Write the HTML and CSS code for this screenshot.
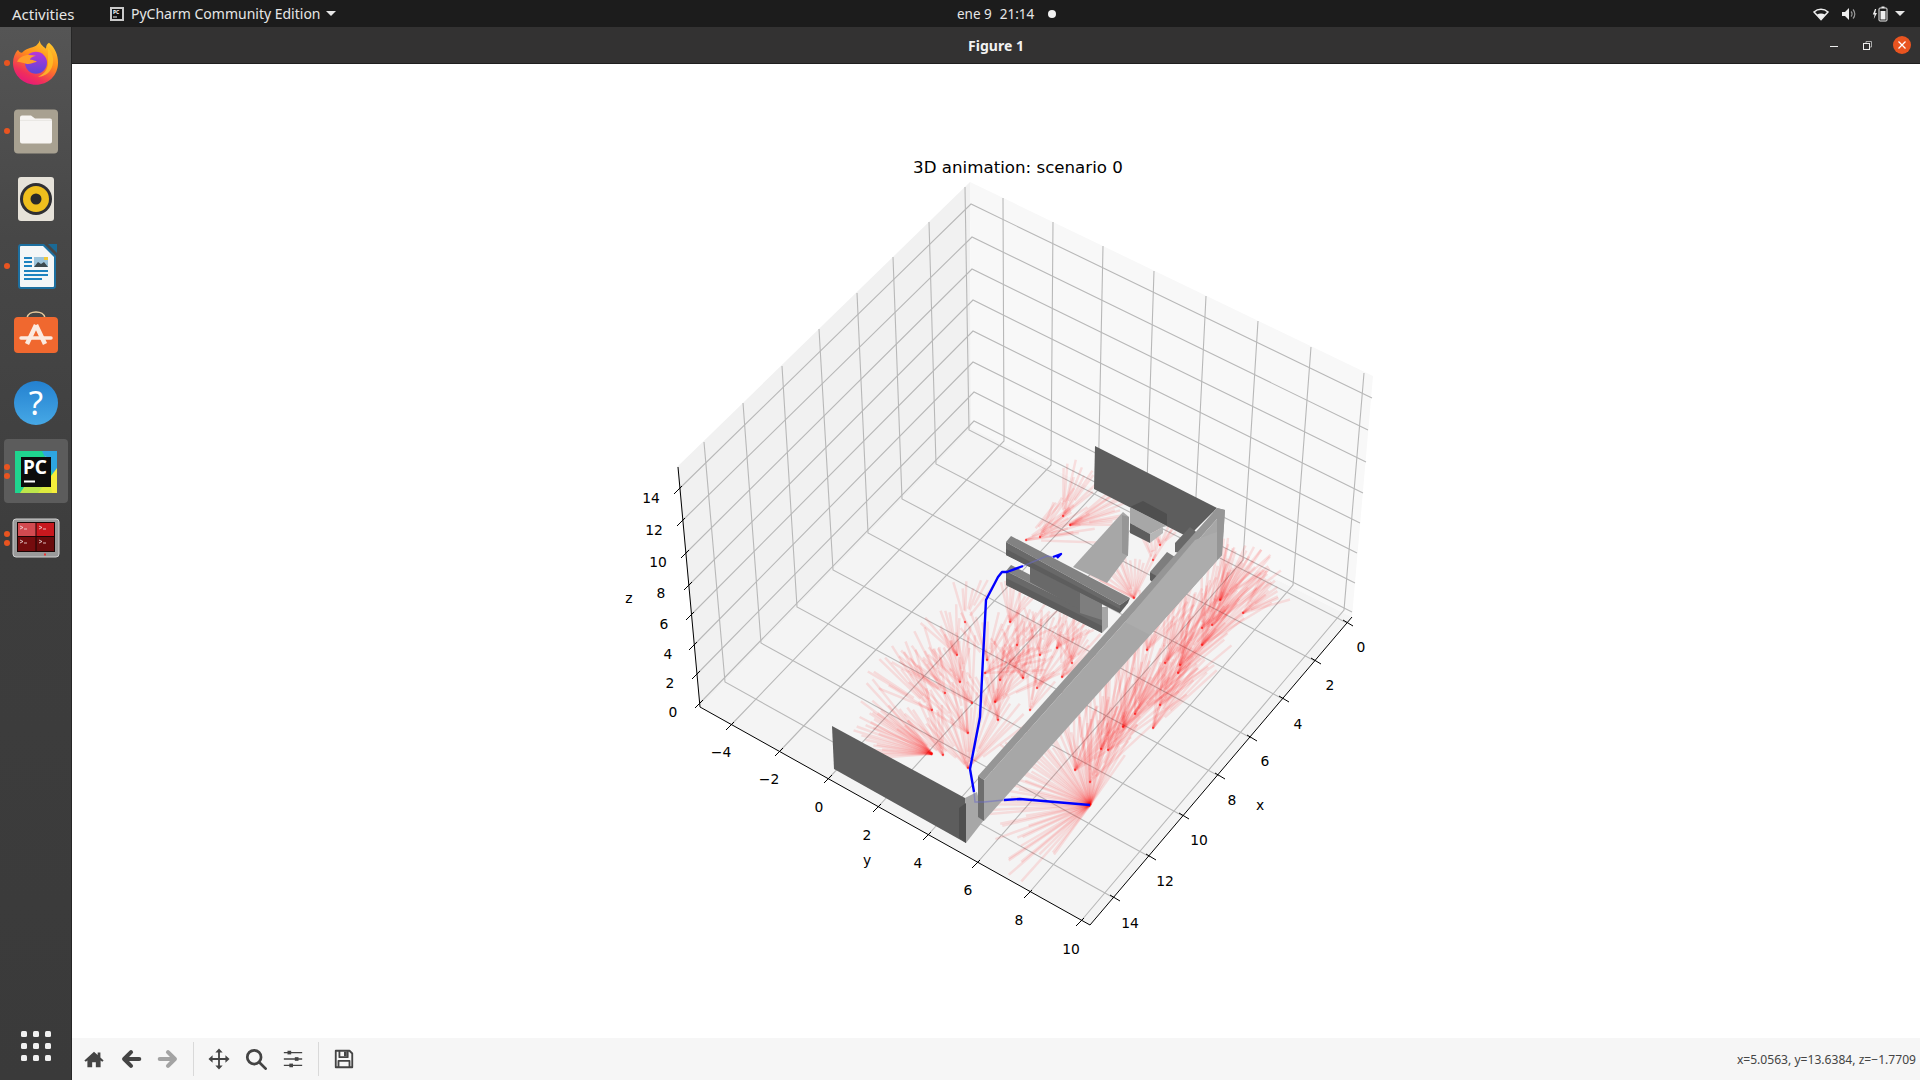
FILE: index.html
```html
<!DOCTYPE html>
<html lang="es">
<head>
<meta charset="utf-8">
<title>Figure 1</title>
<link rel="stylesheet" href="styles.css">
</head>
<body>
<header class="topbar">
  <div class="top-left">
    <span class="activities">Activities</span>
    <span class="app-menu">
      <svg class="app-icon" viewBox="0 0 14 14"><rect width="14" height="14" fill="#c9c9c9"/><rect x="2" y="2" width="10" height="10" fill="#111"/><text class="app-icon-text" x="3" y="7">PC</text><rect x="3" y="9.5" width="4" height="1" fill="#eee"/></svg>
      <span>PyCharm Community Edition</span>
      <span class="caret"></span>
    </span>
  </div>
  <div class="clock"><span>ene 9</span><span>21:14</span></div>
  <span class="clock-dot"></span>
  <div class="tray">
    <svg class="tray-wifi" viewBox="0 0 16 14"><path d="M8 12.5 1 5C5 1.400 11 1.400 15 5Z" fill="none" stroke="#eee" stroke-width="1.600"/><path d="M8 12.500 4 7.500C6.500 6 9.500 6 12 7.500Z" fill="#eee"/></svg>
    <svg class="tray-sound" viewBox="0 0 16 14"><path d="M1 5h3l4-4v12L4 9H1Z" fill="#eee"/><path d="M10 4.500a3.500 3.500 0 0 1 0 5M12 2.500a6.500 6.500 0 0 1 0 9" fill="none" stroke="#999" stroke-width="1.200"/></svg>
    <svg class="tray-battery" viewBox="0 0 16 16"><path d="M3 3 .8 8.500h1.800L1.800 13 5 7H3.200L4.200 3Z" fill="#eee"/><rect x="7" y="2" width="8" height="13" rx="1" fill="none" stroke="#eee"/><rect x="9.500" y=".5" width="3" height="1.500" fill="#eee"/><rect x="8.500" y="5" width="5" height="8.500" fill="#eee"/></svg>
    <span class="caret tray-caret"></span>
  </div>
</header>

<div class="desktop">
  <nav class="dock">
    <div class="dock-item">
      <span class="run-dots low"><i></i></span>
      <svg class="dock-icon" viewBox="0 -0.8 48 48">
        <defs>
          <linearGradient id="fx" x1=".8" y1="0" x2=".3" y2="1"><stop offset="0" stop-color="#ffd22e"/><stop offset=".45" stop-color="#ff8a1c"/><stop offset=".8" stop-color="#f0305a"/><stop offset="1" stop-color="#e5177e"/></linearGradient>
          <linearGradient id="fxp" x1=".5" y1="0" x2=".5" y2="1"><stop offset="0" stop-color="#b936d8"/><stop offset="1" stop-color="#5a45d6"/></linearGradient>
        </defs>
        <path d="M28 1C27 5 30 8 34 11 34 8 35 6 37 5 43 10 46 17 46 25 46 38 36 47 24 47 12 47 1 38 1 25 1 20 3 15 6 12 7 14 8 15 10 15 13 11 20 10 24 8 26 6 28 4 28 1Z" fill="url(#fx)"/>
        <circle cx="24" cy="25" r="11" fill="url(#fxp)"/>
        <path d="M5 24C8 18 14 16 24 18 20 19 18 20 18 22 22 22 25 24 25 24 20 25 18 27 14 26 11 25 8 24 5 24Z" fill="#ff9d2a"/>
        <path d="M36 10C42 16 43 26 38 33 35 37 30 39 26 39 33 36 37 30 36 22 36 18 36 14 36 10Z" fill="#ffc226" opacity=".8"/>
      </svg>
    </div>
    <div class="dock-item">
      <span class="run-dots low"><i></i></span>
      <svg class="dock-icon" viewBox="0 -1.400 48 48">
        <rect x="2" y="2" width="44" height="44" rx="4" fill="#a8a191"/>
        <path d="M8 10a2 2 0 0 1 2-2h9l4 3h15a2 2 0 0 1 2 2v21a2 2 0 0 1-2 2H10a2 2 0 0 1-2-2Z" fill="#f7f5f3"/>
        <path d="M8 13h32" stroke="#dedbd6" stroke-width=".6"/>
      </svg>
    </div>
    <div class="dock-item">
      <svg class="dock-icon" viewBox="0 -1 48 48">
        <rect x="6" y="2" width="36" height="44" rx="3" fill="#e6e2d9"/>
        <circle cx="24" cy="24" r="16" fill="#2f2f33"/>
        <circle cx="24" cy="24" r="13" fill="#efbf1d"/>
        <circle cx="24" cy="24" r="5.500" fill="#2a2a2a"/>
      </svg>
    </div>
    <div class="dock-item">
      <span class="run-dots"><i></i></span>
      <svg class="dock-icon" viewBox="0 -1 48 48">
        <path d="M36 1h9v9Z" fill="#1b6a96"/>
        <path d="M9 1h23l12 12v30a3 3 0 0 1-3 3H9a3 3 0 0 1-3-3V4a3 3 0 0 1 3-3Z" fill="#1d6f9f"/>
        <path d="M9 3h22l11 11v29a1 1 0 0 1-1 1H9a1 1 0 0 1-1-1V4a1 1 0 0 1 1-1Z" fill="#f4f6f7"/>
        <path class="writer-line" d="M12 15h8M12 19h8M12 23h8M12 28h24M12 32h24M12 36h18"/>
        <rect x="22" y="14" width="14" height="10" fill="#9cc4dc"/>
        <path d="M22 24l4-5 3 2 3-2 4 5Z" fill="#3c4a50"/>
        <rect x="32" y="14" width="4" height="3" fill="#efc93a"/>
      </svg>
    </div>
    <div class="dock-item">
      <svg class="dock-icon" viewBox="0 0 48 48">
        <path d="M15 7C16 -1 32 -1 33 7" fill="none" stroke="#e7c99c" stroke-width="1.600"/>
        <rect x="2" y="6" width="44" height="36" rx="4" fill="#f0682f"/>
        <path d="M24 14 15 33M24 14l9 19" stroke="#fbeae0" stroke-width="4.500" fill="none"/>
        <path d="M9 27h30" stroke="#fbeae0" stroke-width="3.500" stroke-linecap="round"/>
      </svg>
    </div>
    <div class="dock-item">
      <svg class="dock-icon" viewBox="0 0 48 48">
        <defs><linearGradient id="hp" x1="0" y1="0" x2="0" y2="1"><stop offset="0" stop-color="#2481d0"/><stop offset="1" stop-color="#46a8e6"/></linearGradient></defs>
        <circle cx="24" cy="24" r="22" fill="url(#hp)"/>
        <text class="help-mark" x="24" y="35.500">?</text>
      </svg>
    </div>
    <div class="dock-item active">
      <span class="run-dots"><i></i><i></i></span>
      <svg class="dock-icon" viewBox="0 0 48 48">
        <rect x="3" y="3" width="42" height="42" fill="#1fd58f"/>
        <path d="M30 3h15v32Z" fill="#2ea6e0"/>
        <path d="M26 45 45 20v25Z" fill="#f6ee3a"/>
        <path d="M8 45 34 8l6 37Z" fill="#d9e93f" opacity=".85"/>
        <rect x="9" y="9" width="30" height="30" fill="#0c0c0c"/>
        <text class="pc-mark" x="11" y="25.500">PC</text>
        <rect x="12" y="32.500" width="11" height="2" fill="#fff"/>
      </svg>
    </div>
    <div class="dock-item">
      <span class="run-dots high"><i></i><i></i></span>
      <svg class="dock-icon" viewBox="0 1 48 48">
        <rect x="1" y="4" width="46" height="38" rx="3" fill="#9a9a9a" stroke="#d0d0d0"/>
        <rect x="5" y="7" width="38" height="30" fill="#1a0505"/>
        <rect x="6" y="8" width="17.500" height="13" fill="#d24a50"/>
        <rect x="24.500" y="8" width="17.500" height="13" fill="#c8181e"/>
        <rect x="6" y="22" width="17.500" height="14" fill="#750c0e"/>
        <rect x="24.500" y="22" width="17.500" height="14" fill="#690b0c"/>
        <path class="term-line" d="M8 11l3 1.500-3 1.500M12 14h3M27 11l3 1.500-3 1.500M31 14h3M8 25l3 1.500-3 1.500M12 28h3M27 25l3 1.500-3 1.500M31 28h3"/>
        <rect x="32" y="38.500" width="2" height="2" fill="#e33"/>
      </svg>
    </div>
    <div class="app-grid">
      <i></i><i></i><i></i><i></i><i></i><i></i><i></i><i></i><i></i>
    </div>
  </nav>

  <main class="window">
    <div class="titlebar">
      <span class="title">Figure 1</span>
      <div class="controls">
        <span class="minimize"></span>
        <svg class="restore" viewBox="0 0 9 9"><path d="M3 2V.5h5.500V6H7" fill="none" stroke="#aaa"/><rect x=".5" y="2.500" width="6" height="6" fill="none" stroke="#eee"/></svg>
        <svg class="close" viewBox="0 0 18 18"><circle cx="9" cy="9" r="9" fill="#e95420"/><path d="M5.500 5.500l7 7M12.500 5.500l-7 7" stroke="#fff" stroke-width="1.300"/></svg>
      </div>
    </div>

    <div class="canvas">
      <svg class="plot" viewBox="72 64 1848 974">
        <text class="label title-3d" x="1018" y="167">3D animation: scenario 0</text>

        <polygon class="pane-left" points="970,182 677,467 700,707 971,428"/>
        <polygon class="pane-right" points="970,182 1373,376 1352,617 971,428"/>
        <polygon class="pane-floor" points="700,707 1090,925 1352,617 971,428"/>
        <g id="grid" class="grid"></g>
        <g id="ticks" class="axis">
          <polyline points="678,467 700,707 1090,925 1352,617"/>
        </g>
        <g id="rays" class="rays"></g>

        <polygon class="f-dark" points="1095,446 1217,508 1188,537 1094,489"/>
        <polygon class="f-darker" points="1130,507 1143,501 1167,514 1167,526"/>
        <polygon class="f-light" points="1130,507 1167,526 1163,527 1150,534 1130,523"/>
        <polygon class="f-dark" points="1130,523 1150,534 1150,543 1130,533"/>
        <polygon class="f-pale" points="1150,534 1163,527 1163,533 1150,543"/>
        <polygon class="f-mid" points="1175,543 1190,527 1200,535 1190,555 1175,552"/>
        <polygon class="f-grey" points="1150,572 1167,552 1180,560 1180,585 1160,580"/>
        <polygon class="f-dark" points="1150,572 1158,577 1158,587 1150,580"/>
        <polygon class="f-light" points="1073,567 1123,512 1129,517 1128,555 1107,583"/>
        <polygon class="f-shade" points="1122,515 1129,517 1128,556 1122,553"/>

        <polygon class="f-top" points="1006,571 1011,565 1108,615 1102,619"/>
        <polygon class="f-mid" points="1006,571 1006,585 1102,633 1102,619"/>
        <polygon class="f-dark" points="1006,578 1006,585 1102,633 1102,626"/>
        <polygon class="f-light" points="1102,607 1108,607 1108,627 1102,633"/>
        <polygon class="f-mid" points="1030,560 1030,582 1080,610 1080,588"/>
        <polygon class="f-grey" points="1080,590 1102,600 1102,620 1080,613"/>

        <polygon class="f-top" points="1006,542 1011,536 1130,598 1120,605"/>
        <polygon class="f-mid" points="1006,542 1006,555 1120,613 1120,605"/>
        <polygon class="f-dark" points="1006,549 1006,555 1120,613 1120,609"/>
        <polygon class="f-dark" points="1120,605 1130,598 1128,603 1120,613"/>

        <polygon class="f-dark" points="832,726 965,798 966,843 834,769"/>
        <polygon class="f-light" points="965,798 977,792 984,820 966,843"/>
        <polygon class="f-darker" points="959,808 966,803 966,843 959,838"/>

        <polygon class="f-shade" points="978,776 1217,508 1225,510 984,780"/>
        <polygon class="f-light" points="984,780 1225,510 1222,555 984,821"/>
        <polygon class="f-pale2" points="1125,622 1195,540 1222,530 1222,555 1150,635"/>
        <polygon class="f-end" points="978,776 984,780 984,821 978,817"/>
        <polygon class="f-shade" points="1217,508 1225,510 1222,555 1217,560"/>

        <polyline class="path-faint" points="1004,800 984,802 975,802 974,792"/>
        <polyline class="path-faint" points="1023,566 1047,556 1053,557"/>
        <polyline class="path" points="1090,805 1020,799 1004,800"/>
        <polyline class="path" points="974,792 970,769 980,717 986,600 998,577 1002,572 1007,572 1023,566"/>
        <polyline class="path" points="1053,557 1061,554 1057,558"/>

        <text class="label" x="721" y="752">−4</text>
        <text class="label" x="769" y="779">−2</text>
        <text class="label" x="819" y="807">0</text>
        <text class="label" x="867" y="835">2</text>
        <text class="label" x="918" y="863">4</text>
        <text class="label" x="968" y="890">6</text>
        <text class="label" x="1019" y="920">8</text>
        <text class="label" x="1071" y="949">10</text>
        <text class="label" x="867" y="860">y</text>

        <text class="label" x="1361" y="647">0</text>
        <text class="label" x="1330" y="685">2</text>
        <text class="label" x="1298" y="724">4</text>
        <text class="label" x="1265" y="761">6</text>
        <text class="label" x="1232" y="800">8</text>
        <text class="label" x="1199" y="840">10</text>
        <text class="label" x="1165" y="881">12</text>
        <text class="label" x="1130" y="923">14</text>
        <text class="label" x="1260" y="805">x</text>

        <text class="label" x="651" y="498">14</text>
        <text class="label" x="654" y="530">12</text>
        <text class="label" x="658" y="562">10</text>
        <text class="label" x="661" y="593">8</text>
        <text class="label" x="664" y="624">6</text>
        <text class="label" x="668" y="654">4</text>
        <text class="label" x="670" y="683">2</text>
        <text class="label" x="673" y="712">0</text>
        <text class="label" x="629" y="598">z</text>
      </svg>
    </div>

    <div class="toolbar">
      <button class="tool"><svg viewBox="0 0 24 24"><path class="ic" d="M12 4 1.500 13.500 3 15l1.800-1.500V21h5.200v-5.500h4V21h5.200v-7.500L21 15l1.500-1.500L19 10.300V5h-3v2.600Z"/></svg></button>
      <button class="tool"><svg viewBox="0 0 24 24"><path class="ic-stroke" d="M21 12H6M12 4.500 4.500 12l7.500 7.500"/></svg></button>
      <button class="tool muted"><svg viewBox="0 0 24 24"><path class="ic-stroke" d="M3 12h15M12 4.500l7.500 7.500-7.500 7.500"/></svg></button>
      <span class="sep"></span>
      <button class="tool"><svg viewBox="0 0 24 24"><path class="ic" d="M12 .5l4 4.500h-3v6h6V8l4.500 4-4.500 4v-3h-6v6h3l-4 4.500L8 19h3v-6H5v3L.5 12 5 8v3h6V5H8Z"/></svg></button>
      <button class="tool"><svg viewBox="0 0 24 24"><circle class="ic-line" cx="10" cy="10" r="7.500"/><path class="ic-line" d="M15.500 15.500 22.500 22.500"/></svg></button>
      <button class="tool"><svg viewBox="0 0 24 24"><path class="ic-thin" d="M2 5h20M2 12h20M2 19h20"/><rect class="ic" x="6" y="3" width="4" height="4"/><rect class="ic" x="14" y="10" width="4" height="4"/><rect class="ic" x="8" y="17" width="4" height="4"/></svg></button>
      <span class="sep"></span>
      <button class="tool"><svg viewBox="0 0 24 24"><path class="ic-thin2" d="M3 3h15l3 3v15H3Z"/><path class="ic-thin2" d="M7 3v7h9V3M6 21v-7h12v7"/><rect class="ic" x="12" y="4" width="3" height="5"/></svg></button>
      <span class="status">x=5.0563, y=13.6384, z=−1.7709</span>
    </div>
  </main>
</div>
<script src="plot.js"></script>
</body>
</html>
```

FILE: styles.css
```css
* { box-sizing: border-box; }
html, body { margin: 0; height: 100%; }
body {
  width: 1920px;
  height: 1080px;
  overflow: hidden;
  display: flex;
  flex-direction: column;
  font-family: "Noto Sans", "Open Sans", sans-serif;
  background: #fff;
}

.topbar {
  flex: 0 0 27px;
  display: flex;
  align-items: center;
  background: #1c1c1c;
  color: #e6e6e6;
  font-size: 14px;
}
.top-left { flex: 0 0 957px; display: flex; align-items: center; }
.activities { margin-left: 12px; width: 98px; font-size: 15px; }
.app-menu { display: flex; align-items: center; gap: 7px; }
.app-icon { width: 14px; height: 14px; }
.app-icon-text { font: 700 5px "Noto Sans", sans-serif; fill: #fff; }
.caret {
  width: 0; height: 0;
  border-left: 5px solid transparent;
  border-right: 5px solid transparent;
  border-top: 5px solid #e6e6e6;
}
.app-menu .caret { margin-left: -2px; }
.clock { display: flex; gap: 8px; width: 89px; font-size: 13.5px; }
.clock-dot { width: 8px; height: 8px; border-radius: 50%; background: #f2f2f2; margin-left: 2px; }
.tray { margin-left: auto; display: flex; align-items: center; padding-right: 15px; }
.tray-wifi { width: 16px; height: 14px; }
.tray-sound { width: 16px; height: 14px; margin-left: 12px; }
.tray-battery { width: 16px; height: 16px; margin-left: 15px; }
.tray-caret { margin-left: 7px; }

.desktop { flex: 1; display: flex; min-height: 0; }

.dock {
  flex: 0 0 72px;
  display: flex;
  flex-direction: column;
  background: linear-gradient(180deg, #555 0%, #474747 20%, #3d3d3d 50%, #3a3a3a 100%);
  border-right: 1px solid #262626;
  padding-bottom: 19px;
}
.dock-item {
  position: relative;
  height: 68.4px;
  flex: 0 0 68.4px;
  display: flex;
  align-items: center;
  justify-content: center;
}
.dock-item.active::before {
  content: "";
  position: absolute;
  left: 4px; top: 2px; right: 3px; bottom: 2.400px;
  background: #5c5c5c;
  border-radius: 4px;
}
.dock-icon { position: relative; width: 48px; height: 48px; }
.run-dots {
  position: absolute;
  left: 4px; top: 0; bottom: 0;
  display: flex;
  flex-direction: column;
  justify-content: center;
  gap: 3px;
  z-index: 1;
}
.run-dots.low { top: 3px; }
.run-dots.high { bottom: 3px; }
.run-dots i { width: 6px; height: 6px; border-radius: 50%; background: #e95420; display: block; }
.writer-line { stroke: #1e82bf; stroke-width: 2; fill: none; }
.term-line { stroke: #f3e4e4; stroke-width: .8; fill: none; }
.help-mark { font: 400 33px "Noto Sans", sans-serif; fill: #fff; text-anchor: middle; }
.pc-mark { font: 700 19px "Noto Sans", sans-serif; fill: #fff; }

.app-grid {
  margin-top: auto;
  align-self: center;
  display: grid;
  grid-template-columns: repeat(3, 6px);
  gap: 6px;
}
.app-grid i { width: 6px; height: 6px; border-radius: 1.500px; background: #f0f0f0; display: block; }

.window { flex: 1; display: flex; flex-direction: column; min-width: 0; }
.titlebar {
  flex: 0 0 37px;
  position: relative;
  display: flex;
  align-items: center;
  justify-content: center;
  background: #333232;
  border-bottom: 1px solid #1f1f1f;
  color: #f2f2f2;
}
.title { font-size: 14px; font-weight: 700; }
.controls {
  position: absolute;
  right: 9px; top: 0; bottom: 0;
  display: flex;
  align-items: center;
}
.minimize { width: 8px; height: 1px; background: #eee; margin-top: 3px; }
.restore { width: 9px; height: 9px; margin-left: 25px; }
.close { width: 18px; height: 18px; margin-left: 21px; }

.canvas { flex: 1; background: #fff; min-height: 0; }
.plot { display: block; width: 1848px; height: 974px; }
.label { font: 13.890px "DejaVu Sans", sans-serif; fill: #000; text-anchor: middle; dominant-baseline: central; }
.title-3d { font-size: 16.670px; }
.pane-left { fill: #f1f1f1; }
.pane-right { fill: #f8f8f8; }
.pane-floor { fill: #f4f4f4; }
.grid polyline { fill: none; stroke: #b8b8b8; stroke-width: 1.100; }
.axis polyline, .axis line { fill: none; stroke: #000; stroke-width: 1; }
.rays line { stroke: #ff0000; stroke-width: 2.500; stroke-opacity: .1; }
.rays circle { fill: #ff0000; fill-opacity: .6; }

.f-dark { fill: #5d5d5d; }
.f-darker { fill: #4f4f4f; }
.f-mid { fill: #696969; }
.f-grey { fill: #7e7e7e; }
.f-top { fill: #828282; }
.f-light { fill: #a7a7a7; }
.f-pale { fill: #b6b6b6; }
.f-pale2 { fill: #acacac; }
.f-shade { fill: #969696; }
.f-end { fill: #6e6e6e; }
.path { fill: none; stroke: #0000ff; stroke-width: 2.400; stroke-linejoin: round; }
.path-faint { fill: none; stroke: #6c6cc8; stroke-width: 1.500; stroke-opacity: .55; }

.toolbar {
  flex: 0 0 42px;
  display: flex;
  align-items: center;
  padding-left: 3.500px;
  background: #f6f6f6;
}
.tool {
  width: 37px;
  height: 42px;
  padding: 0;
  border: 0;
  background: none;
  display: flex;
  align-items: center;
  justify-content: center;
}
.tool svg { width: 22px; height: 22px; }
.sep { width: 1px; height: 34px; margin: 0 6.500px; background: #d9d9d9; }
.ic { fill: #444; stroke: none; }
.ic-stroke { fill: none; stroke: #444; stroke-width: 4.500; stroke-linecap: round; stroke-linejoin: round; }
.muted .ic-stroke { stroke: #a3a3a3; }
.ic-line { fill: none; stroke: #444; stroke-width: 3; stroke-linecap: round; }
.ic-thin { fill: none; stroke: #444; stroke-width: 1.400; }
.ic-thin2 { fill: none; stroke: #444; stroke-width: 2; stroke-linejoin: round; }
.status { margin-left: auto; padding-right: 4px; font-size: 12.100px; color: #444; }
```

FILE: plot.js
```js
var NS = "http://www.w3.org/2000/svg";
function add(parent, tag, attrs) {
  var el = document.createElementNS(NS, tag);
  for (var k in attrs) el.setAttribute(k, attrs[k]);
  parent.appendChild(el);
}

var grid = document.getElementById("grid");
var ticks = document.getElementById("ticks");

// x grid lines: wall top, wall foot, axis tick
var xLines = [
  [965,187,969,430,1347,623],[929,222,936,464,1315,661],[893,257,902,499,1283,699],
  [857,293,868,533,1251,738],[819,329,833,570,1219,776],[782,366,797,607,1183,816],
  [743,403,761,643,1150,857],[704,442,725,682,1114,898]
];
// y grid lines
var yLines = [
  [1003,198,1004,441,731,725],[1053,222,1051,465,780,751],[1103,246,1098,490,829,778],
  [1154,271,1146,513,878,807],[1206,296,1194,536,928,835],[1258,321,1243,560,977,863],
  [1311,347,1293,585,1029,893],[1364,373,1344,610,1081,921]
];
// z grid lines: right end, corner, axis tick
var zLines = [
  [1372,398,971,204,679,489],[1368,430,972,237,682,521],[1366,462,972,269,686,553],
  [1363,493,973,300,689,585],[1360,523,973,331,691,615],[1357,553,973,362,694,645],
  [1355,583,974,392,697,674],[1352,612,974,421,700,703]
];
[xLines, yLines, zLines].forEach(function (set) {
  set.forEach(function (l) {
    add(grid, "polyline", { points: l[0]+","+l[1]+" "+l[2]+","+l[3]+" "+l[4]+","+l[5] });
  });
});
xLines.forEach(function (l) {
  add(ticks, "line", { x1: l[4]-4, y1: l[5]-3, x2: l[4]+6, y2: l[5]+3 });
});
yLines.forEach(function (l) {
  add(ticks, "line", { x1: l[4]-5, y1: l[5]+5, x2: l[4]+3, y2: l[5]-3 });
});
zLines.forEach(function (l) {
  add(ticks, "line", { x1: l[4]-5, y1: l[5]+5, x2: l[4]+3, y2: l[5]-3 });
});

// laser fans: x, y, centre angle, half spread, min length, max length, rays
var startFan = [1090,805,145,90,60,112,60];
var lowerFan = [932,754,155,30,50,100,26];
var fans = [
  [943,755,125,35,45,80,12],[968,768,90,55,45,90,24],
  [968,733,120,30,60,95,10],[932,710,130,30,50,80,10],[945,693,125,30,40,70,10],
  [960,682,105,35,35,62,10],[957,655,110,30,30,55,9],[965,622,80,30,28,48,7],
  [972,703,120,35,40,75,9],[995,702,60,40,40,80,12],[987,660,90,40,35,58,10],
  [1010,622,75,35,28,48,8],[985,673,30,28,50,90,9],[1023,678,100,35,35,60,10],
  [1037,688,70,35,40,70,10],[1062,677,60,35,35,65,10],[1057,648,55,35,35,55,9],
  [998,720,100,35,40,75,10],[1072,663,90,35,25,45,8],[1017,645,60,35,30,55,9],
  [1040,655,75,35,30,50,8],[1000,680,65,35,35,60,8],[1030,710,70,30,30,55,6],
  [1075,770,65,35,50,90,12],[1090,782,70,32,55,100,12],[1101,749,68,30,70,115,14],
  [1108,750,65,30,70,120,14],[1123,727,65,30,65,115,14],[1135,714,62,30,70,120,15],
  [1153,728,62,22,55,90,12],[1160,705,62,28,60,100,11],[1147,650,72,30,45,85,11],
  [1165,663,65,28,60,100,12],[1178,673,60,25,55,90,12],[1180,665,62,25,55,90,11],
  [1202,645,58,28,55,90,13],[1202,628,62,30,60,95,12],[1212,625,58,26,55,90,12],
  [1220,600,58,30,45,75,12],[1243,613,42,26,32,50,11],
  [1134,598,110,48,35,52,16],[1026,540,25,28,40,72,10],[1040,537,40,32,35,65,9],
  [1063,516,65,28,35,70,10],[1070,525,20,22,40,62,12],[1153,560,90,35,18,40,6],
  [1160,545,80,45,12,28,6]
];
var raysEl = document.getElementById("rays");
var seed = 12345;
function rnd() {
  seed = (seed * 1664525 + 1013904223) % 4294967296;
  return seed / 4294967296;
}
function drawFan(f, scatter) {
  for (var i = 0; i < f[6]; i++) {
    var a = (f[2] + f[3] * (2 * (i + rnd()) / f[6] - 1)) * Math.PI / 180;
    var len = f[4] + (f[5] - f[4]) * rnd();
    var start = scatter && rnd() < .5 ? rnd() * .4 * len : 0;
    add(raysEl, "line", {
      x1: (f[0] + Math.cos(a) * start).toFixed(1),
      y1: (f[1] - Math.sin(a) * start).toFixed(1),
      x2: (f[0] + Math.cos(a) * len).toFixed(1),
      y2: (f[1] - Math.sin(a) * len).toFixed(1)
    });
  }
  add(raysEl, "circle", { cx: f[0], cy: f[1], r: 1.2 });
}
drawFan(startFan, false);
drawFan(lowerFan, false);
fans.forEach(function (f) { drawFan(f, true); });
```
